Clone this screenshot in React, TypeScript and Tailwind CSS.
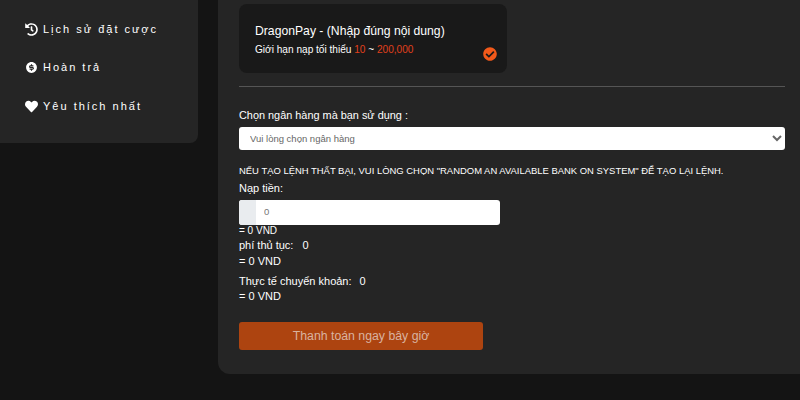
import { FaCheckCircle, FaHeart, FaHistory } from "react-icons/fa";
import { RiMoneyDollarCircleFill } from "react-icons/ri";

const menu = [
  { label: "Lịch sử đặt cược", icon: <FaHistory className="text-[13px]" /> },
  { label: "Hoàn trả", icon: <RiMoneyDollarCircleFill className="text-[15px]" /> },
  { label: "Yêu thích nhất", icon: <FaHeart className="text-[13px]" /> },
];

export default function App() {
  return (
    <div className="flex h-[400px] w-[800px] overflow-hidden bg-[#141414] font-['Liberation_Sans',Arial,sans-serif] text-white">
      <aside className="flex h-[143px] w-[198px] shrink-0 flex-col gap-[20.5px] rounded-br-lg bg-[#252525] pl-[25px] pt-[20px]">
        {menu.map((item) => (
          <div key={item.label} className="flex h-[18px] items-center gap-[5px] text-[11px] tracking-[2px] text-white">
            <span className="flex w-[13px] justify-center">{item.icon}</span>
            {item.label}
          </div>
        ))}
      </aside>

      <main className="ml-[20px] h-[374px] flex-1 rounded-bl-xl bg-[#252525] pl-[21px] pr-[15px] pt-[4px]">
        <div className="relative h-[69px] w-[268px] rounded-lg bg-[#191919] pl-[16px] pt-[19px]">
          <p className="text-[12.2px] leading-[16px] text-white">DragonPay - (Nhập đúng nội dung)</p>
          <p className="mt-[4px] text-[10.1px] leading-[14px] text-white">
            Giới hạn nạp tối thiểu <span className="text-[#e0401c]">10</span> ~{" "}
            <span className="text-[#e0401c]">200,000</span>
          </p>
          <FaCheckCircle className="absolute bottom-[12px] right-[10px] text-[14px] text-[#f2591a]" />
        </div>

        <div className="mt-[13px] h-px bg-[#555555]" />

        <label className="mt-[21px] block text-[10.9px] leading-[15px] text-white">Chọn ngân hàng mà bạn sử dụng :</label>
        <select className="mt-[4px] block h-[23px] w-full rounded-[3px] bg-white pl-[7px] text-[9.5px] text-[#666666]">
          <option>Vui lòng chọn ngân hàng</option>
        </select>

        <p className="mt-[14px] whitespace-nowrap text-[9.45px] leading-[13px] text-white">
          NẾU TẠO LỆNH THẤT BẠI, VUI LÒNG CHỌN "RANDOM AN AVAILABLE BANK ON SYSTEM" ĐỂ TẠO LẠI LỆNH.
        </p>
        <p className="mt-[4px] text-[11px] leading-[14px] text-white">Nạp tiền:</p>

        <div className="mt-[5px] flex h-[25px] w-[261px] overflow-hidden rounded-[3px] bg-white">
          <div className="w-[17px] bg-[#e9ecef]" />
          <input readOnly placeholder="0" className="min-w-0 flex-1 pl-[8px] text-[9.5px] text-[#666666] outline-none placeholder:text-[#777777]" />
        </div>

        <p className="text-[10px] leading-[12px] text-white">= 0 VND</p>
        <p className="mt-[1px] flex gap-[9px] text-[11px] leading-[15px] text-white">
          <span>phí thủ tục:</span>
          <span>0</span>
        </p>
        <p className="mt-[1px] text-[11px] leading-[15px] text-white">= 0 VND</p>
        <p className="mt-[5px] flex gap-[8px] text-[11px] leading-[15px] text-white">
          <span>Thực tế chuyển khoản:</span>
          <span>0</span>
        </p>
        <p className="text-[11px] leading-[15px] text-white">= 0 VND</p>

        <button className="mt-[18px] block h-[28px] w-[244px] rounded-[3px] bg-[#ad4410] text-center text-[12.3px] text-[#d9b3a0]">
          Thanh toán ngay bây giờ
        </button>
      </main>
    </div>
  );
}
